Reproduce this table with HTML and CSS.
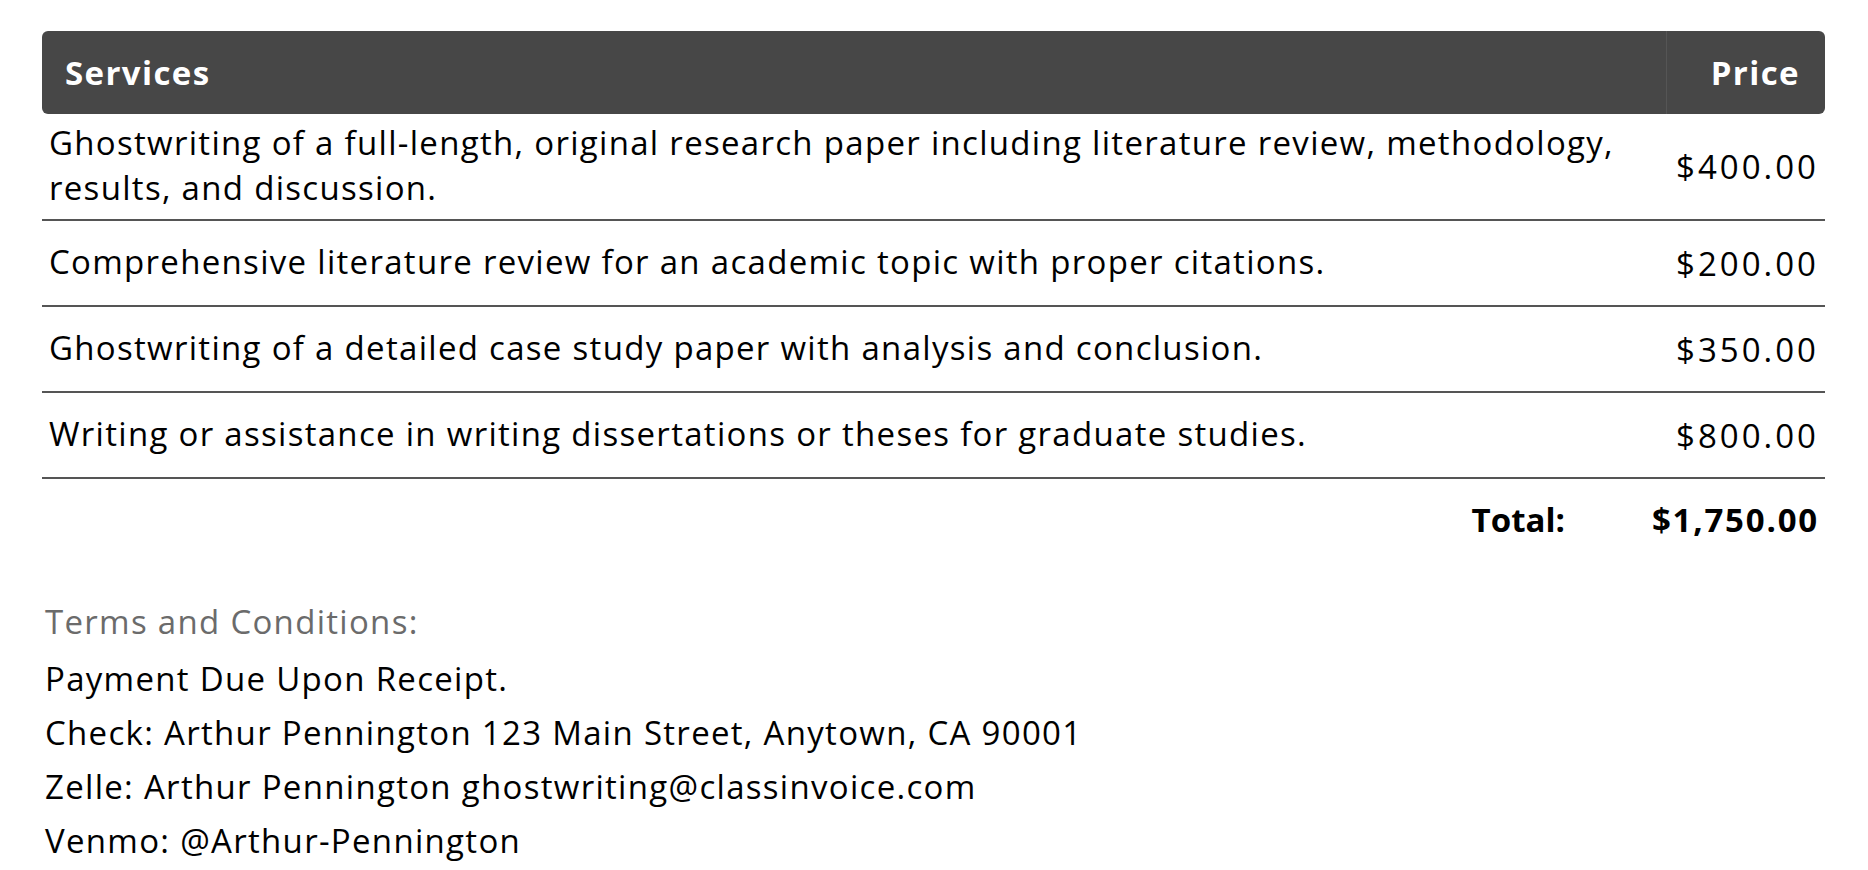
FILE: index.html
```html
<!DOCTYPE html>
<html lang="en">
<head>
<meta charset="utf-8">
<title>Invoice services</title>
<link rel="stylesheet" href="styles.css">
</head>
<body>
<div class="page">
  <div class="table">
    <div class="thead">
      <div class="th th-desc">Services</div>
      <div class="th th-price">Price</div>
    </div>
    <div class="row">
      <div class="desc">Ghostwriting of a full-length, original research paper including literature review, methodology, results, and discussion.</div>
      <div class="price">$400.00</div>
    </div>
    <div class="row">
      <div class="desc">Comprehensive literature review for an academic topic with proper citations.</div>
      <div class="price">$200.00</div>
    </div>
    <div class="row">
      <div class="desc">Ghostwriting of a detailed case study paper with analysis and conclusion.</div>
      <div class="price">$350.00</div>
    </div>
    <div class="row">
      <div class="desc">Writing or assistance in writing dissertations or theses for graduate studies.</div>
      <div class="price">$800.00</div>
    </div>
    <div class="total">
      <div class="total-label">Total:</div>
      <div class="total-value">$1,750.00</div>
    </div>
  </div>
  <div class="terms">
    <div class="terms-title">Terms and Conditions:</div>
    <div class="terms-line">Payment Due Upon Receipt.</div>
    <div class="terms-line">Check: Arthur Pennington 123 Main Street, Anytown, CA 90001</div>
    <div class="terms-line">Zelle: Arthur Pennington ghostwriting@classinvoice.com</div>
    <div class="terms-line">Venmo: @Arthur-Pennington</div>
  </div>
</div>
</body>
</html>
```
FILE: styles.css
```css
html, body {
  margin: 0;
  padding: 0;
  background: #ffffff;
}
body {
  font-family: "Open Sans", "Lato", sans-serif;
  color: #000000;
  font-size: 33px;
  font-weight: 500;
  letter-spacing: 1.3px;
}
.page {
  padding: 31px 43px 0 42px;
}
.table {
  display: flex;
  flex-direction: column;
}
.thead {
  display: flex;
  height: 83px;
  background: #474747;
  border-radius: 6px;
  color: #ffffff;
  font-weight: 700;
  letter-spacing: 1.4px;
}
.th {
  display: flex;
  align-items: center;
}
.th-desc {
  flex: 1;
  padding-left: 23px;
}
.th-price {
  width: 159px;
  justify-content: flex-end;
  padding-right: 25px;
  box-sizing: border-box;
  border-left: 1px solid #555555;
}
.row {
  display: flex;
  align-items: center;
  min-height: 84px;
  border-bottom: 2px solid #555555;
  line-height: 45px;
}
.desc {
  flex: 1;
  padding: 6px 8px 9px 7px;
}
.price {
  width: 159px;
  box-sizing: border-box;
  text-align: right;
  padding-right: 6px;
  white-space: nowrap;
  letter-spacing: 3px;
}
.total {
  display: flex;
  justify-content: flex-end;
  align-items: center;
  height: 80px;
  font-weight: 700;
  letter-spacing: 0;
}
.total-label {
  margin-right: 87px;
}
.total-value {
  padding-right: 6px;
  letter-spacing: 1.8px;
}
.terms {
  padding: 36px 0 0 3px;
  line-height: 54px;
}
.terms-title {
  color: #6b6b6b;
  margin-bottom: 3px;
}
```
